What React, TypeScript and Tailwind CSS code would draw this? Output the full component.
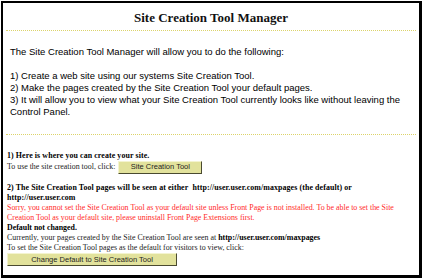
import React from 'react';

function Divider() {
  return <div className="mx-[3px] border-t border-dotted border-[#dcd36a]" />;
}

function OldButton({ children, className = '' }: { children: React.ReactNode; className?: string }) {
  return (
    <span
      className={`inline-flex items-center justify-center h-[13px] bg-[#e2e29c] border border-t-[#f4f4d0] border-l-[#f4f4d0] border-r-[#4a4a30] border-b-[#4a4a30] text-[7.5px] leading-none text-[#222] font-['Liberation_Sans',Arial,sans-serif] ${className}`}
    >
      {children}
    </span>
  );
}

export default function App() {
  return (
    <div className="w-[422px] h-[278px] bg-white pt-px pl-px">
      <div className="h-full flex flex-col border-t-2 border-l-2 border-r-[3px] border-b-[3px] border-black">
        <h1 className="h-[27px] flex items-center justify-center pt-[3px] text-[13px] font-bold text-[#111] font-['Liberation_Serif','Times_New_Roman',serif]">
          Site Creation Tool Manager
        </h1>
        <Divider />
        <div className="px-[7px] pt-[15px] pb-[16px] text-[9.5px] leading-[12px] text-black font-['Liberation_Sans',Arial,sans-serif]">
          <p>The Site Creation Tool Manager will allow you to do the following:</p>
          <p className="mt-[12px]">1) Create a web site using our systems Site Creation Tool.</p>
          <p>2) Make the pages created by the Site Creation Tool your default pages.</p>
          <p>
            3) It will allow you to view what your Site Creation Tool currently looks like without leaving the Control
            Panel.
          </p>
        </div>
        <Divider />
        <div className="px-[4px] pt-[16px] text-[7.9px] leading-[10px] text-[#222] font-['Liberation_Serif','Times_New_Roman',serif]">
          <p className="font-bold text-black tracking-[0.1px]">1) Here is where you can create your site.</p>
          <p className="flex items-center gap-[3px] h-[12px]">
            <span>To use the site creation tool, click:</span>
            <OldButton className="w-[84px]">Site Creation Tool</OldButton>
          </p>
          <p className="mt-[10px] font-bold text-black tracking-[0.1px]">
            2) The Site Creation Tool pages will be seen at either&nbsp; http://user.user.com/maxpages (the default) or
            http://user.user.com
          </p>
          <p className="text-[#ff2a2a]">
            Sorry, you cannot set the Site Creation Tool as your default site unless Front Page is not installed. To be
            able to set the Site Creation Tool as your default site, please uninstall Front Page Extensions first.
          </p>
          <p className="font-bold text-black">Default not changed.</p>
          <p>
            Currently, your pages created by the Site Creation Tool are seen at{' '}
            <span className="font-bold text-black">http://user.user.com/maxpages</span>
          </p>
          <p>To set the Site Creation Tool pages as the default for visitors to view, click:</p>
          <OldButton className="w-[170px]">Change Default to Site Creation Tool</OldButton>
        </div>
      </div>
    </div>
  );
}
